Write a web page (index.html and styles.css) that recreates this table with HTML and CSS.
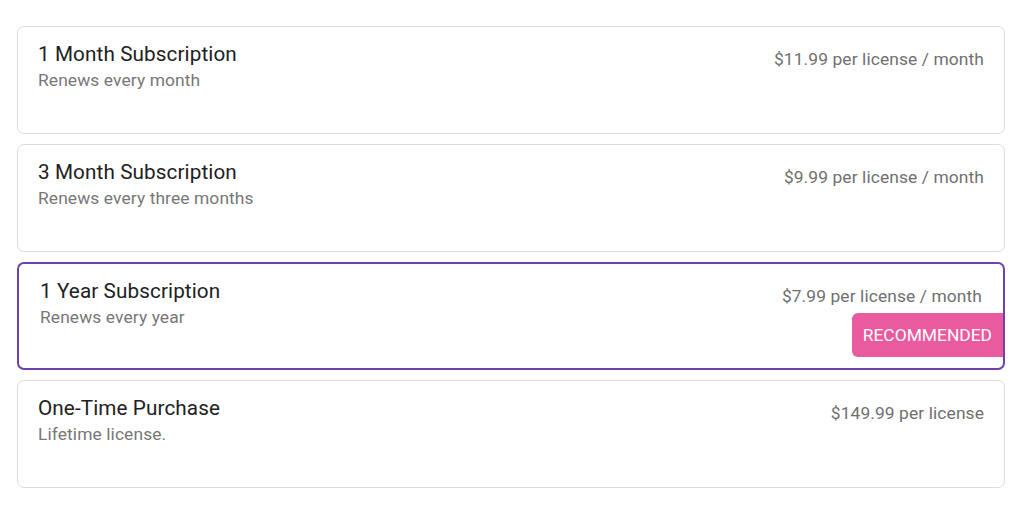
FILE: index.html
```html
<!DOCTYPE html>
<html>
<head>
<meta charset="utf-8">
<link rel="stylesheet" href="styles.css">
</head>
<body>
<div class="plans">
  <div class="plan">
    <div class="info">
      <div class="title">1 Month Subscription</div>
      <div class="sub">Renews every month</div>
    </div>
    <div class="price">$11.99 per license / month</div>
  </div>
  <div class="plan">
    <div class="info">
      <div class="title">3 Month Subscription</div>
      <div class="sub">Renews every three months</div>
    </div>
    <div class="price">$9.99 per license / month</div>
  </div>
  <div class="plan selected">
    <div class="info">
      <div class="title">1 Year Subscription</div>
      <div class="sub">Renews every year</div>
    </div>
    <div class="price">$7.99 per license / month</div>
    <div class="badge">RECOMMENDED</div>
  </div>
  <div class="plan">
    <div class="info">
      <div class="title">One-Time Purchase</div>
      <div class="sub">Lifetime license.</div>
    </div>
    <div class="price">$149.99 per license</div>
  </div>
</div>
</body>
</html>
```
FILE: styles.css
```css
html, body {
  margin: 0;
  padding: 0;
  background: #ffffff;
}
body {
  font-family: Roboto, "Liberation Sans", sans-serif;
}
.plans {
  display: flex;
  flex-direction: column;
  gap: 10px;
  width: 988px;
  margin: 26px 0 0 17px;
}
.plan {
  position: relative;
  box-sizing: border-box;
  height: 108px;
  border: 1px solid #dcdcdc;
  border-radius: 7px;
  padding: 14px 20px;
  display: flex;
  justify-content: space-between;
  align-items: flex-start;
}
.plan.selected {
  border: 2px solid #6c43a8;
  padding: 14px 21px;
}
.title {
  font-size: 20.7px;
  line-height: 26px;
  color: #212121;
  letter-spacing: 0.1px;
}
.sub {
  font-size: 17.4px;
  line-height: 26px;
  color: #777777;
  letter-spacing: 0.1px;
}
.price {
  font-size: 17.4px;
  line-height: 26px;
  color: #707070;
  padding-top: 5px;
  letter-spacing: 0.1px;
}
.badge {
  position: absolute;
  right: 0;
  bottom: 11px;
  height: 44px;
  line-height: 44px;
  padding: 0 11px;
  background: #ea5a9e;
  color: #ffffff;
  font-size: 17.4px;
  letter-spacing: 0;
  border-radius: 6px 0 0 6px;
}
```
